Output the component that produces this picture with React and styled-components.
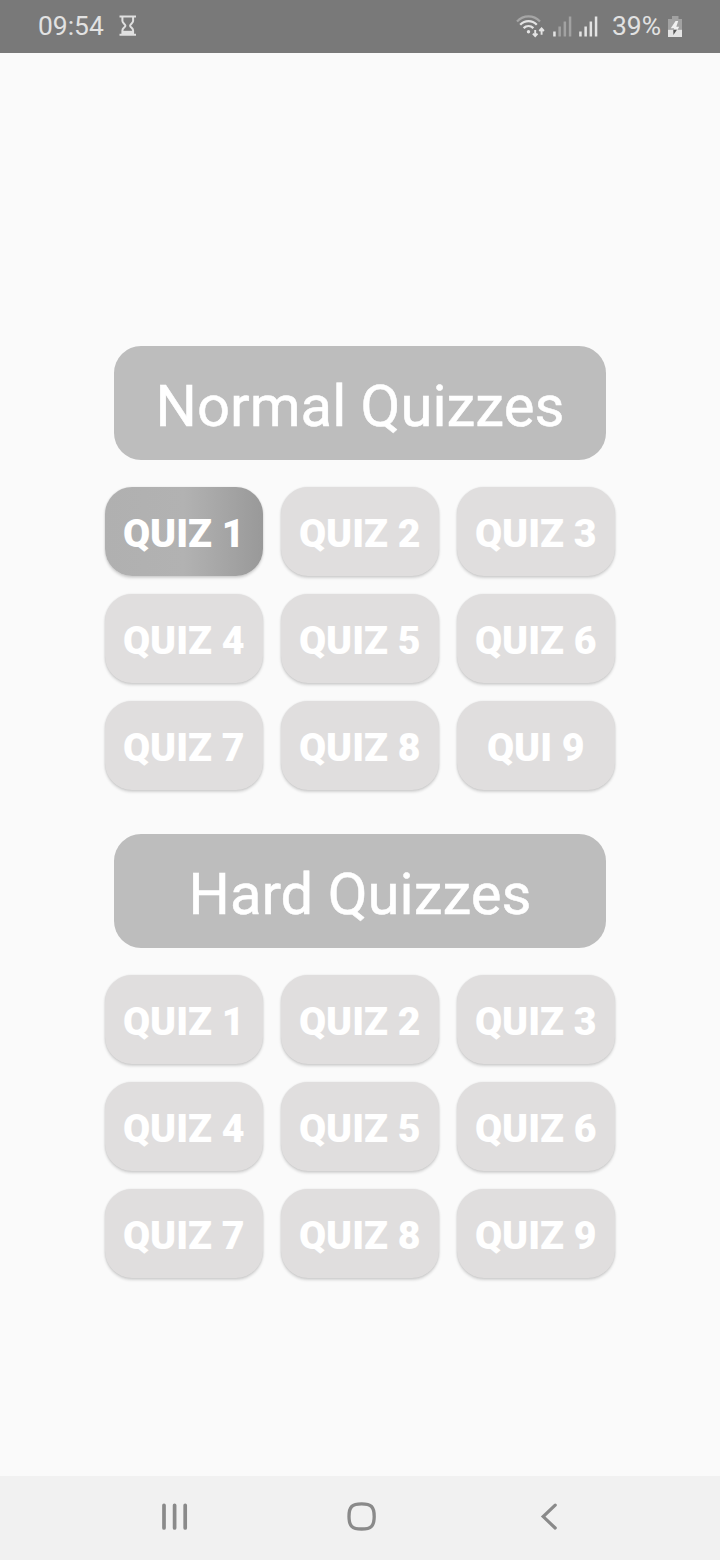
import React from "react";
import styled, { createGlobalStyle, css } from "styled-components";

const sections = [
  {
    title: "Normal Quizzes",
    unlocked: 1,
    quizzes: ["QUIZ 1", "QUIZ 2", "QUIZ 3", "QUIZ 4", "QUIZ 5", "QUIZ 6", "QUIZ 7", "QUIZ 8", "QUI 9"],
  },
  {
    title: "Hard Quizzes",
    unlocked: 0,
    quizzes: ["QUIZ 1", "QUIZ 2", "QUIZ 3", "QUIZ 4", "QUIZ 5", "QUIZ 6", "QUIZ 7", "QUIZ 8", "QUIZ 9"],
  },
];

const HourglassIcon = () => (
  <svg width="18" height="22" viewBox="0 0 18 22" fill="none">
    <path d="M0.5 1.5H17M0.5 19.8H17" stroke="#e0e0e0" strokeWidth="2" />
    <path
      d="M3.4 2V6C3.4 8 6.4 9.2 6.4 10.7C6.4 12.2 3.4 13.2 3.4 15.4V19M14.1 2V6C14.1 8 11.1 9.2 11.1 10.7C11.1 12.2 14.1 13.2 14.1 15.4V19"
      stroke="#e0e0e0"
      strokeWidth="2"
    />
    <path d="M3.4 15.8H14.1V19.8H3.4Z" fill="#e0e0e0" />
  </svg>
);

const WifiIcon = () => (
  <svg width="30" height="24" viewBox="0 0 30 24" fill="none">
    <path d="M1 7.4C7.5 0.6 17.5 0.6 24 7.4" stroke="#a6a6a6" strokeWidth="2.2" />
    <path d="M4.2 10.8C9 5.9 16 5.9 20.8 10.8" stroke="#e4e4e4" strokeWidth="2.3" />
    <path d="M7.6 14.2C10.5 11.4 14.5 11.4 17.4 14.2" stroke="#e4e4e4" strokeWidth="2.3" />
    <circle cx="12.5" cy="17.8" r="1.7" fill="#e4e4e4" />
    <path d="M19.2 16V22M16.9 19.7L19.2 22.2L21.5 19.7" stroke="#e4e4e4" strokeWidth="1.9" />
    <path d="M25.6 20.7V14.7M23.3 17L25.6 14.5L27.9 17" stroke="#e4e4e4" strokeWidth="1.9" />
  </svg>
);

const SignalIcon = ({ bars }) => (
  <svg width="19" height="21" viewBox="0 0 19 21">
    {[5, 10, 15, 20].map((h, i) => (
      <rect
        key={h}
        x={i * 5.2 + 0.2}
        y={20.5 - h}
        width="2.5"
        height={h}
        fill={i < bars ? "#e4e4e4" : "#a2a2a2"}
      />
    ))}
  </svg>
);

const BatteryIcon = () => (
  <svg width="14" height="21" viewBox="0 0 14 21">
    <path d="M4 0H10.5V3H14V13.7H0V3H4Z" fill="#a2a2a2" />
    <path d="M0 13.7H14V21H0Z" fill="#e4e4e4" />
    <path d="M7.6 5L2.8 12.2H6.2L5.6 13.7H9.6L11.2 10.8H8.3L10.2 5Z" fill="#f0f0f0" />
    <path d="M5.3 13.7H9L5.4 19Z" fill="#555" />
  </svg>
);

const RecentsIcon = () => (
  <svg width="26" height="28" viewBox="0 0 26 28">
    <path d="M2 2.3V24.9M12.6 2.3V24.9M23.2 2.3V24.9" stroke="#8a8a8a" strokeWidth="3.7" strokeLinecap="round" />
  </svg>
);

const HomeIcon = () => (
  <svg width="30" height="30" viewBox="0 0 30 30" fill="none">
    <path
      d="M14.6 1.8C24.2 1.8 27.2 4.8 27.2 14.4C27.2 24 24.2 27 14.6 27C5 27 2 24 2 14.4C2 4.8 5 1.8 14.6 1.8Z"
      stroke="#8a8a8a"
      strokeWidth="3.3"
    />
  </svg>
);

const BackIcon = () => (
  <svg width="18" height="28" viewBox="0 0 18 28" fill="none">
    <path d="M15.2 2.2L3.2 13.6L15.2 25" stroke="#8a8a8a" strokeWidth="3.2" strokeLinecap="round" />
  </svg>
);

const App = () => (
  <Screen>
    <GlobalStyle />
    <StatusBar>
      <StatusText>09:54</StatusText>
      <HourglassIcon />
      <StatusIcons>
        <WifiIcon />
        <Signals>
          <SignalIcon bars={1} />
          <SignalIcon bars={4} />
        </Signals>
        <StatusText>39%</StatusText>
        <BatteryIcon />
      </StatusIcons>
    </StatusBar>
    <Content>
      {sections.map(({ title, unlocked, quizzes }) => (
        <Section key={title}>
          <SectionTitle>{title}</SectionTitle>
          <QuizGrid>
            {quizzes.map((quiz, i) => (
              <QuizButton key={quiz} $active={i < unlocked}>
                {quiz}
              </QuizButton>
            ))}
          </QuizGrid>
        </Section>
      ))}
    </Content>
    <NavBar>
      <NavButton aria-label="Recents">
        <RecentsIcon />
      </NavButton>
      <NavButton aria-label="Home">
        <HomeIcon />
      </NavButton>
      <NavButton aria-label="Back">
        <BackIcon />
      </NavButton>
    </NavBar>
  </Screen>
);

export default App;

const GlobalStyle = createGlobalStyle`
  * {
    box-sizing: border-box;
  }
  body {
    margin: 0;
    background: #fafafa;
    font-family: Roboto, sans-serif;
  }
`;

const Screen = styled.div`
  display: flex;
  flex-direction: column;
  width: 720px;
  height: 1560px;
  background: #fafafa;
`;

const StatusBar = styled.header`
  display: flex;
  align-items: center;
  height: 53px;
  padding: 0 38px 1px;
  background: #797979;
  svg {
    display: block;
    flex: none;
  }
  > svg {
    margin: 0 0 1px 15px;
  }
`;

const StatusText = styled.span`
  color: #e2e2e2;
  font-size: 26.4px;
  line-height: 32px;
`;

const StatusIcons = styled.div`
  display: flex;
  align-items: center;
  margin-left: auto;
  > svg:first-child {
    margin-right: 6.5px;
  }
  > svg:last-child {
    margin-left: 7px;
  }
`;

const Signals = styled.div`
  display: flex;
  gap: 7px;
  margin-right: 14.5px;
`;

const Content = styled.main`
  display: flex;
  flex: 1;
  flex-direction: column;
  align-items: center;
  gap: 44px;
  padding-top: 293px;
`;

const Section = styled.section`
  display: flex;
  flex-direction: column;
  align-items: center;
  gap: 27px;
`;

const SectionTitle = styled.h2`
  width: 492px;
  height: 114px;
  margin: 0;
  padding-top: 3px;
  border-radius: 27px;
  background: #bdbdbd;
  color: #fff;
  font-size: 58px;
  font-weight: 400;
  line-height: 114px;
  text-align: center;
  -webkit-text-stroke: 0.5px #fff;
`;

const QuizGrid = styled.div`
  display: grid;
  grid-template-columns: repeat(3, 158px);
  grid-auto-rows: 89px;
  gap: 18px;
`;

const QuizButton = styled.button`
  padding: 4px 0.5px 0 0;
  border: 0;
  border-radius: 27px;
  background: #e0dede;
  box-shadow: 0 2px 3px rgba(0, 0, 0, 0.16), 0 0 2px rgba(0, 0, 0, 0.1);
  color: #fff;
  font-family: inherit;
  font-size: 39.3px;
  font-weight: 900;
  white-space: nowrap;
  ${({ $active }) =>
    $active &&
    css`
      background: linear-gradient(90deg, #b0b0b0 0%, #b2b2b2 50%, #999 100%);
    `}
`;

const NavBar = styled.nav`
  display: flex;
  align-items: center;
  justify-content: center;
  gap: 93px;
  height: 84px;
  padding: 0 0 3px 3px;
  background: #f1f1f1;
`;

const NavButton = styled.button`
  display: flex;
  align-items: center;
  justify-content: center;
  width: 94px;
  height: 60px;
  padding: 0;
  border: 0;
  background: none;
`;
